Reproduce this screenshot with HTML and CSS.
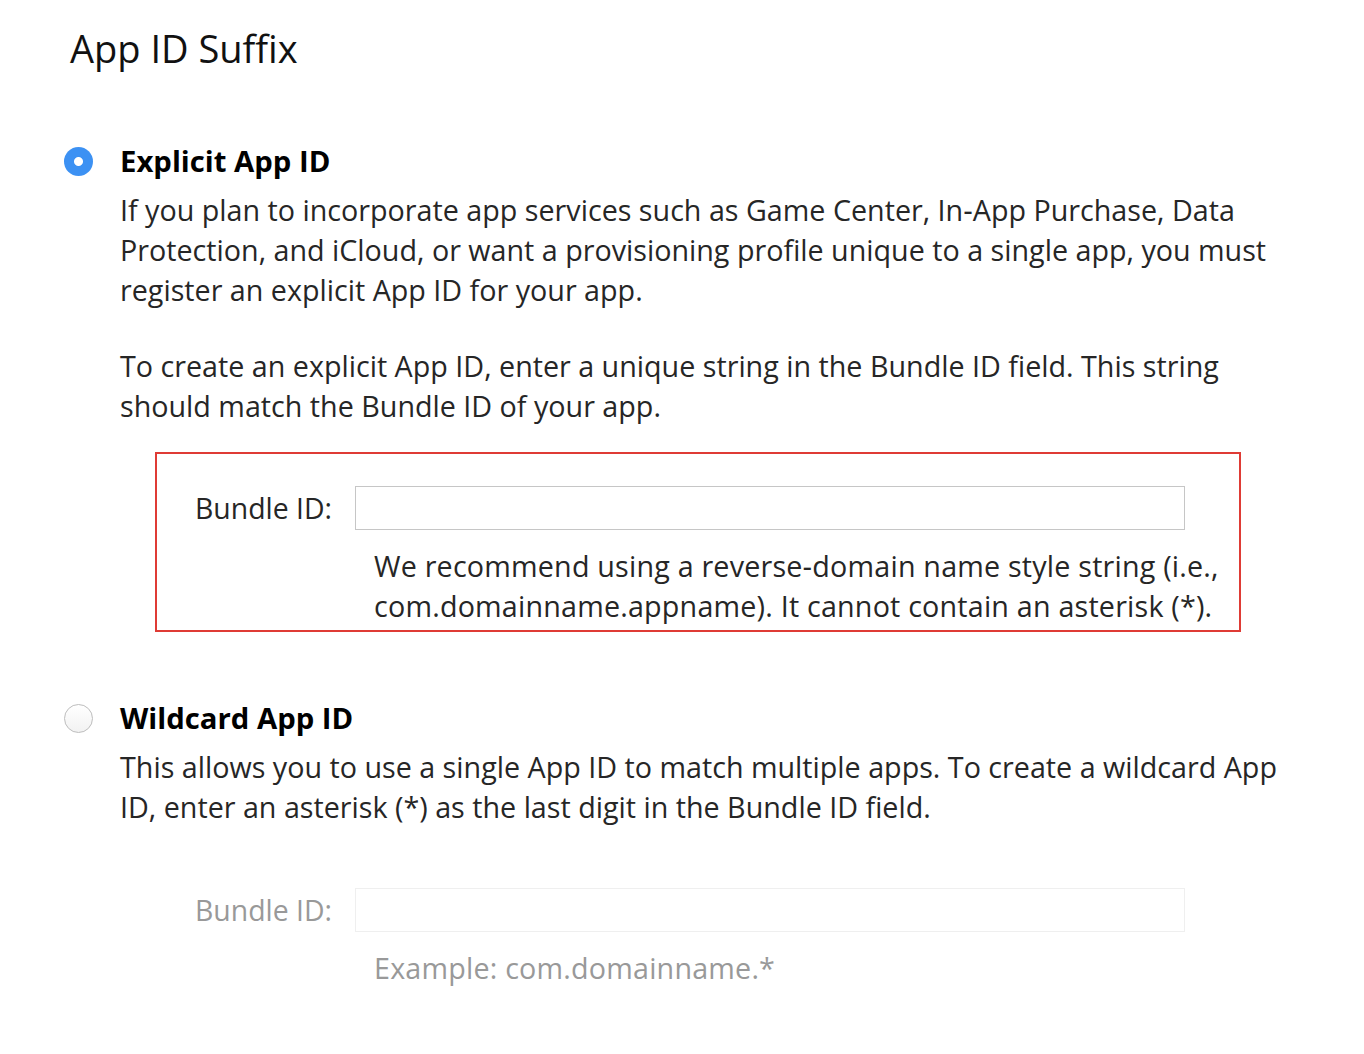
FILE: index.html
```html
<!DOCTYPE html>
<html lang="en">
<head>
    <meta charset="UTF-8">
    <title>App ID Suffix</title>
    <link rel="stylesheet" href="styles.css">
</head>
<body>
    <div class="suffix-panel">
        <h1 class="panel-title">App ID Suffix</h1>

        <!-- Explicit -->
        <section class="option">
            <div class="option-head">
                <span class="radio checked"></span>
                <h2>Explicit App ID</h2>
            </div>
            <div class="option-body">
                <p>If you plan to incorporate app services such as Game Center, In&#8209;App Purchase, Data Protection, and iCloud, or want a provisioning profile unique to a single app, you must register an explicit App ID for your app.</p>
                <p>To create an explicit App ID, enter a unique string in the Bundle ID field. This string should match the Bundle ID of your app.</p>
            </div>
            <div class="bundle-box error">
                <div class="bundle-row">
                    <label>Bundle ID:</label>
                    <input type="text" class="bundle-input">
                </div>
                <p class="bundle-hint">We recommend using a reverse&#8209;domain name style string (i.e., com.domainname.appname). It cannot contain an asterisk (*).</p>
            </div>
        </section>

        <!-- Wildcard -->
        <section class="option wildcard">
            <div class="option-head">
                <span class="radio"></span>
                <h2>Wildcard App ID</h2>
            </div>
            <div class="option-body">
                <p>This allows you to use a single App ID to match multiple apps. To create a wildcard App ID, enter an asterisk (*) as the last digit in the Bundle ID field.</p>
            </div>
            <div class="bundle-box disabled">
                <div class="bundle-row">
                    <label>Bundle ID:</label>
                    <input type="text" class="bundle-input" disabled>
                </div>
                <p class="bundle-hint">Example: com.domainname.*</p>
            </div>
        </section>
    </div>
</body>
</html>
```

FILE: styles.css
```css
body {
    margin: 0;
    background: #fff;
    font-family: "Open Sans", "Liberation Sans", sans-serif;
    color: #262626;
}

.suffix-panel {
    padding: 24px 0 0 64px;
    width: 1240px;
}

.panel-title {
    margin: 0 0 0 6px;
    font-size: 38px;
    font-weight: 400;
    color: #111;
    line-height: 48px;
}

.option {
    margin-top: 69px;
}

.option.wildcard {
    margin-top: 66px;
}

.option-head {
    display: flex;
    align-items: center;
    gap: 27px;
    height: 40px;
}

.option-head h2 {
    margin: 0;
    font-size: 29.3px;
    font-weight: 700;
    color: #000;
}

.radio {
    width: 29px;
    height: 29px;
    border-radius: 50%;
    box-sizing: border-box;
    border: 1px solid #bdbdbd;
    background: linear-gradient(#fff, #f2f2f2);
    flex: none;
}

.radio.checked {
    border: none;
    background: radial-gradient(circle, #fff 0 4px, #3c91f3 5px);
}

.option-body {
    padding-left: 56px;
}

.option-body p {
    max-width: 1170px;
    margin: 9px 0 36px;
    font-size: 28.7px;
    line-height: 40px;
}

.bundle-box {
    margin: -10px 0 0 91px;
    width: 1086px;
    box-sizing: border-box;
    padding: 32px 0 0 38px;
    height: 180px;
    border: 2px solid transparent;
}

.bundle-box.error {
    border-color: #df3b35;
}

.bundle-row {
    display: flex;
    align-items: center;
    gap: 22px;
}

.bundle-row label {
    font-size: 28.4px;
    width: 138px;
}

.bundle-input {
    width: 830px;
    height: 44px;
    box-sizing: border-box;
    border: 1px solid #c6c6c6;
    background: #fff;
    margin: 0;
}

.bundle-hint {
    margin: 16px 0 0 179px;
    font-size: 28.7px;
    letter-spacing: 0.2px;
    line-height: 40px;
}

.bundle-box.disabled {
    margin-top: -9px;
}

.bundle-box.disabled label,
.bundle-box.disabled .bundle-hint {
    color: #999;
}

.bundle-box.disabled .bundle-input {
    border-color: #efefef;
}
```
